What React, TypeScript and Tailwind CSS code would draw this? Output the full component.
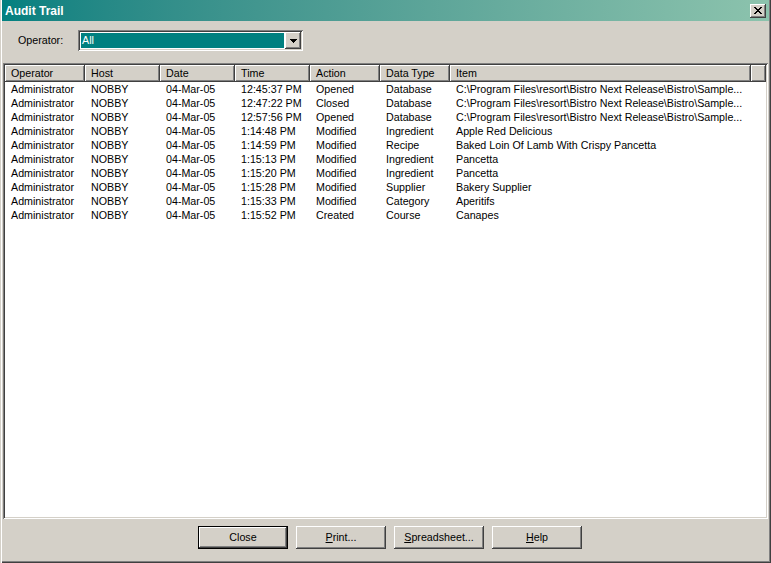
import React from 'react';

const columns = [
  { label: 'Operator', w: 'w-[80px]' },
  { label: 'Host', w: 'w-[75px]' },
  { label: 'Date', w: 'w-[75px]' },
  { label: 'Time', w: 'w-[75px]' },
  { label: 'Action', w: 'w-[70px]' },
  { label: 'Data Type', w: 'w-[70px]' },
  { label: 'Item', w: 'w-[301px]' },
];

const dbPath = 'C:\\Program Files\\resort\\Bistro Next Release\\Bistro\\Sample...';

const rows = [
  ['Administrator', 'NOBBY', '04-Mar-05', '12:45:37 PM', 'Opened', 'Database', dbPath],
  ['Administrator', 'NOBBY', '04-Mar-05', '12:47:22 PM', 'Closed', 'Database', dbPath],
  ['Administrator', 'NOBBY', '04-Mar-05', '12:57:56 PM', 'Opened', 'Database', dbPath],
  ['Administrator', 'NOBBY', '04-Mar-05', '1:14:48 PM', 'Modified', 'Ingredient', 'Apple Red Delicious'],
  ['Administrator', 'NOBBY', '04-Mar-05', '1:14:59 PM', 'Modified', 'Recipe', 'Baked Loin Of Lamb With Crispy Pancetta'],
  ['Administrator', 'NOBBY', '04-Mar-05', '1:15:13 PM', 'Modified', 'Ingredient', 'Pancetta'],
  ['Administrator', 'NOBBY', '04-Mar-05', '1:15:20 PM', 'Modified', 'Ingredient', 'Pancetta'],
  ['Administrator', 'NOBBY', '04-Mar-05', '1:15:28 PM', 'Modified', 'Supplier', 'Bakery Supplier'],
  ['Administrator', 'NOBBY', '04-Mar-05', '1:15:33 PM', 'Modified', 'Category', 'Aperitifs'],
  ['Administrator', 'NOBBY', '04-Mar-05', '1:15:52 PM', 'Created', 'Course', 'Canapes'],
];

const raised =
  'shadow-[inset_-1px_-1px_#404040,inset_1px_1px_#ffffff,inset_-2px_-2px_#808080]';

function Button({ children, isDefault }: { children: React.ReactNode; isDefault?: boolean }) {
  if (isDefault) {
    return (
      <div className="w-[90px] h-[23px] border border-black bg-[#d4d0c8]">
        <div className={`h-full flex items-center justify-center ${raised}`}>{children}</div>
      </div>
    );
  }
  return (
    <div className={`w-[90px] h-[23px] flex items-center justify-center bg-[#d4d0c8] ${raised}`}>
      {children}
    </div>
  );
}

export default function App() {
  return (
    <div className="w-[771px] h-[563px] bg-[#d4d0c8] flex flex-col pl-[2px] pr-[2px] pb-[2px] text-[10.7px] text-black font-['Liberation_Sans',Arial,sans-serif] shadow-[inset_1px_0_#d4d0c8,inset_2px_0_#ffffff,inset_-1px_-1px_#404040,inset_-2px_-2px_#808080]">
      {/* title bar */}
      <div className="h-[21px] flex items-center justify-between pl-[3px] pr-[3px] bg-gradient-to-r from-[#008080] to-[#8cc3ad]">
        <span className="text-white font-bold text-[12px] leading-none">Audit Trail</span>
        <div className={`w-[16px] h-[14px] bg-[#d4d0c8] flex items-center justify-center ${raised}`}>
          <svg width="8" height="7" viewBox="0 0 8 7" shapeRendering="crispEdges">
            <path d="M0 0h2v1H0zM6 0h2v1H6zM1 1h2v1H1zM5 1h2v1H5zM2 2h4v1H2zM3 3h2v1H3zM2 4h4v1H2zM1 5h2v1H1zM5 5h2v1H5zM0 6h2v1H0zM6 6h2v1H6z" fill="#000" />
          </svg>
        </div>
      </div>

      {/* operator filter */}
      <div className="flex items-center pl-[16px] mt-[9px] h-[21px]">
        <span className="w-[60px]">Operator:</span>
        <div className="w-[225px] h-[21px] p-[2px] bg-white shadow-[inset_1px_1px_#808080,inset_-1px_-1px_#ffffff,inset_2px_2px_#404040,inset_-2px_-2px_#d4d0c8]">
          <div className="h-full flex">
            <div className="flex-1 p-[1px] bg-white">
              <div className="h-full bg-[#008080] text-white flex items-center pl-[1px]">All</div>
            </div>
            <div className={`w-[16px] h-full bg-[#d4d0c8] flex items-center justify-center ${raised}`}>
              <svg width="7" height="4" viewBox="0 0 7 4" shapeRendering="crispEdges">
                <path d="M0 0h7v1H0zM1 1h5v1H1zM2 2h3v1H2zM3 3h1v1H3z" fill="#000" />
              </svg>
            </div>
          </div>
        </div>
      </div>

      {/* list view */}
      <div className="mt-[12px] ml-[1px] mr-[1px] h-[456px] p-[2px] bg-white shadow-[inset_1px_1px_#808080,inset_-1px_-1px_#ffffff,inset_2px_2px_#404040,inset_-2px_-2px_#d4d0c8] flex flex-col">
        <div className="flex h-[17px] shrink-0">
          {columns.map((c) => (
            <div
              key={c.label}
              className={`${c.w} shrink-0 h-full bg-[#d4d0c8] pl-[6px] flex items-center whitespace-nowrap overflow-hidden ${raised}`}
            >
              {c.label}
            </div>
          ))}
          <div className={`flex-1 h-full bg-[#d4d0c8] ${raised}`} />
        </div>
        <div className="flex flex-col">
          {rows.map((r, i) => (
            <div key={i} className="flex h-[14px] leading-[14px]">
              {r.map((cell, j) => (
                <div key={j} className={`${columns[j].w} shrink-0 pl-[6px] whitespace-nowrap overflow-hidden`}>
                  {cell}
                </div>
              ))}
            </div>
          ))}
        </div>
      </div>

      {/* buttons */}
      <div className="flex pl-[196px] pt-[7px] gap-2">
        <Button isDefault>Close</Button>
        <Button>
          <span>
            <span className="underline">P</span>rint...
          </span>
        </Button>
        <Button>
          <span>
            <span className="underline">S</span>preadsheet...
          </span>
        </Button>
        <Button>
          <span>
            <span className="underline">H</span>elp
          </span>
        </Button>
      </div>
    </div>
  );
}
